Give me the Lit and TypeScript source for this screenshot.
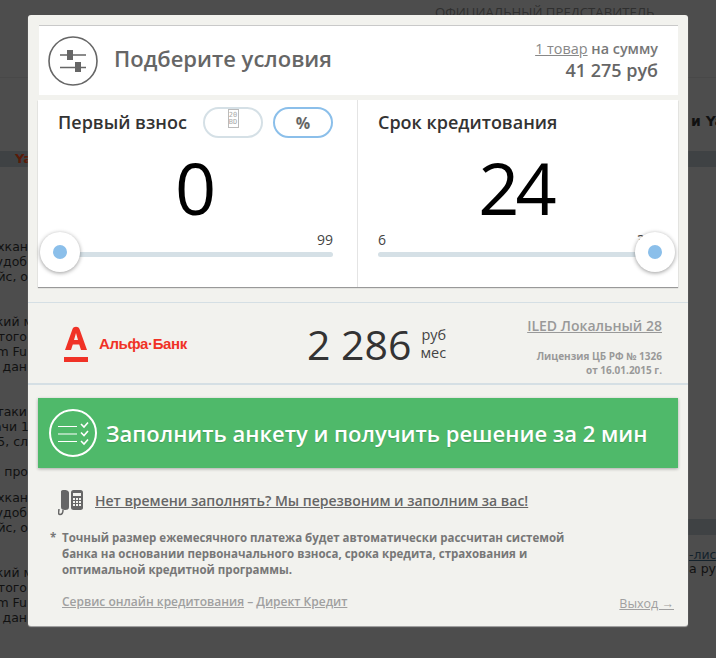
import { LitElement, html, css, svg } from "lit";
import { customElement } from "lit/decorators.js";

const backdrop: [string, number, number][] = [
  ["ухкан", 247, 28], ["удоб", 262, 27], ["йс, о", 277, 28],
  ["ский м", 322, 33], ["того", 337, 27], ["m Fu", 352, 27], ["дан", 367, 27],
  ["таки", 412, 27], ["ачи 1", 427, 29], ["X5, сл", 442, 28], ["х про", 472, 28],
  ["ухкан", 498, 28], ["удоб", 513, 27], ["йс, о", 528, 28],
  ["ский м", 573, 33], ["того", 588, 27], ["m Fu", 603, 27], ["дан", 618, 27],
];

@customElement("app-root")
export class AppRoot extends LitElement {
  static styles = css`
    :host { display: block; width: 716px; height: 658px; position: relative; overflow: hidden; background: #4d4d4d; font-family: "Open Sans", sans-serif; }
    .bg { position: absolute; inset: 0; font-family: "DejaVu Sans", sans-serif; font-size: 12.5px; color: #111; }
    .bgline { position: absolute; white-space: nowrap; line-height: 16px; }
    .rule { position: absolute; left: 0; right: 0; top: 77px; height: 1px; background: #484848; }
    .band { position: absolute; left: 0; right: 0; top: 151px; height: 16px; background: #3f4244; }
    .band.side { left: 688px; top: 519px; }
    .ya { position: absolute; left: 15px; top: 151px; font: bold 13px/16px "DejaVu Sans", sans-serif; color: #5a1a08; }
    .rep { position: absolute; left: 435px; top: 4px; font: 13.2px/16px "Open Sans", sans-serif; color: #2f2f2f; white-space: nowrap; }
    .iy { position: absolute; left: 691px; top: 113px; font: bold 14px/16px "DejaVu Sans", sans-serif; color: #111; white-space: nowrap; }
    .rt { position: absolute; left: 689px; white-space: nowrap; line-height: 16px; }
    .rt.link { top: 547px; text-decoration: underline; color: #14222c; }
    .rt.plain { top: 561px; }

    .modal { position: absolute; left: 28px; top: 15px; width: 660px; height: 611px; box-sizing: border-box; padding-top: 10px; background: #f2f2ee; border-radius: 3px; box-shadow: 0 1px 1px #aaa; color: #666; }

    .head { height: 70px; margin: 0 10px 0 11px; box-sizing: border-box; border-top: 1px solid #c9c9c9; background: #fff; display: flex; align-items: center; padding: 0 20px 0 9px; }
    .head svg { flex: none; }
    .title { margin: 0 0 5px 16px; font-size: 22px; font-weight: 600; color: #666; flex: 1; }
    .sum { text-align: right; line-height: 21px; padding-bottom: 2px; }
    .sum .l1 { font-size: 14.4px; font-weight: 600; color: #777; }
    .sum .l1 u { font-weight: 400; color: #888; }
    .sum .l2 { font-size: 18px; font-weight: 600; color: #666; line-height: 23px; }

    .cards { margin: 5px 10px 0; height: 187px; background: #fff; display: flex; box-shadow: 0 1px 1px #999; }
    .card { box-sizing: border-box; padding: 7px 25px 0 20px; position: relative; flex: 0 0 321px; }
    .card.first { flex: 0 0 319px; padding-right: 24px; }
    .card + .card { border-left: 1px solid #e4e4e4; }
    .top { display: flex; align-items: center; height: 31px; }
    .lab { font-size: 18px; font-weight: 600; color: #333; flex: 1; margin-top: -2px; }
    .pill { width: 60px; height: 31px; box-sizing: border-box; border: 2px solid #d5e0e6; border-radius: 16px; display: flex; align-items: flex-start; justify-content: center; }
    .pill + .pill { margin-left: 10px; }
    .pill.on { border-color: #8bbfea; font-size: 16px; font-weight: 700; color: #666; align-items: center; }
    .tofu { width: 11px; height: 19px; box-sizing: border-box; border: 1px solid #bbb; font: 7px/7px "DejaVu Sans Mono", monospace; color: #aaa; text-align: center; display: flex; flex-direction: column; justify-content: center; }
    .big { font-size: 72px; line-height: 98px; color: #000; text-align: center; height: 98px; }
    .big.tight { letter-spacing: -4px; }
    .limits { display: flex; justify-content: space-between; font-size: 14px; line-height: 18px; color: #444; margin-top: -5px; }
    .track { height: 5px; margin-top: 3px; border-radius: 3px; background: #d5e0e6; position: relative; }
    .knob { position: absolute; top: -20px; width: 40px; height: 40px; border-radius: 50%; background: #fff; box-shadow: 0 1px 4px rgba(0,0,0,.4); display: flex; align-items: center; justify-content: center; }
    .knob::after { content: ""; width: 14px; height: 14px; border-radius: 50%; background: #8bbfea; }
    .knob.a { left: -18px; }
    .knob.b { right: -22px; }

    .offer { margin-top: 15px; height: 83px; box-sizing: border-box; border-top: 1px solid #d5dfe4; border-bottom: 2px solid #d5dfe4; display: flex; align-items: center; padding-right: 26px; }
    .logo { display: flex; align-items: flex-start; margin-left: 36px; width: 243px; flex: none; padding-top: 2px; }
    .alfa { margin: 9px 0 0 11px; font: bold 15px/18px "Liberation Sans", sans-serif; letter-spacing: -.4px; color: #f03226; white-space: nowrap; }
    .price { font-size: 41px; color: #333; white-space: nowrap; line-height: 50px; margin-top: 2px; }
    .unit { margin: 2px 0 0 9px; font-size: 14.5px; line-height: 18px; color: #444; text-align: right; }
    .bank { margin-left: auto; text-align: right; align-self: flex-start; padding-top: 13px; }
    .bank u { display: block; font-size: 14px; font-weight: 600; color: #999; line-height: 20px; }
    .lic { margin-top: 13px; font-size: 10px; font-weight: 700; line-height: 14px; color: #999; }

    .cta { margin: 13px 10px 0; height: 70px; background: #4fb96a; box-shadow: 0 1px 3px rgba(0,0,0,.3); display: flex; align-items: center; padding-left: 10px; color: #fff; font-size: 22px; font-weight: 600; text-shadow: 0 1px 1px rgba(0,0,0,.15); }
    .cta span { margin-left: 8px; white-space: nowrap; }

    .call { margin: 22px 0 0 30px; display: flex; align-items: flex-start; height: 31px; }
    .call u { margin: 1px 0 0 11px; font-size: 14px; font-weight: 600; line-height: 20px; color: #666; white-space: nowrap; }
    .note { position: relative; margin: 9px 0 0 34px; font-size: 11.5px; font-weight: 700; line-height: 16px; color: #777; white-space: nowrap; }
    .note i { position: absolute; left: -12px; top: 0; font-style: normal; }
    .foot { display: flex; justify-content: space-between; align-items: flex-end; margin: 16px 14px 0 34px; font-size: 12px; font-weight: 600; color: #a0a0a0; line-height: 16px; }
    .foot .x { font-size: 12.5px; font-weight: 400; position: relative; top: 2px; }
  `;

  private sliders() {
    return svg`<circle cx="25" cy="25" r="24" fill="none" stroke="#666" stroke-width="1.6"/>
      <path d="M12 19h26M12 31.500h26" stroke="#666" stroke-width="1.300" fill="none"/>
      <rect x="19" y="14" width="6" height="10" fill="#666"/>
      <rect x="27" y="26" width="6" height="10" fill="#666"/>`;
  }

  private checklist() {
    return svg`<circle cx="24" cy="24" r="23" fill="none" stroke="#fff" stroke-width="2"/>
      <path d="M9 17.500h19M9 25h19M9 32.500h19" stroke="#fff" stroke-width="1.200" fill="none"/>
      <path d="M32 15l3 3 4-4.500M32 23.500l3 3 4-4.500M32 32l3 3 4-4.500" stroke="#fff" stroke-width="1.600" fill="none"/>`;
  }

  private phone() {
    return svg`<path d="M3 1.500C3 .500 4 0 6 0s5 .500 5 3v14c0 2-1 3-4 3-3 0-4-1-4-3z" fill="#666"/>
      <path d="M5 20c0 3-1 4.500-3 4.500S.600 22.500 1 19" fill="none" stroke="#666" stroke-width="1.500"/>
      <rect x="13" y="0" width="12" height="20" rx="2.500" fill="#666"/>
      <rect x="15" y="3" width="8" height="3" fill="#f2f2ee"/>
      <path d="M15 8h2v2h-2zM18 8h2v2h-2zM21 8h2v2h-2zM15 11h2v2h-2zM18 11h2v2h-2zM21 11h2v2h-2zM15 14h2v2h-2zM18 14h2v2h-2zM21 14h2v2h-2z" fill="#f2f2ee"/>`;
  }

  private alfaMark() {
    return svg`<path d="M1 24 L8.500 3 C9.500 0 14.500 0 15.500 3 L23 24 H17 L15.200 18.500 H8.800 L7 24 Z M10 14 H14 L12 7 Z" fill="#f03226" fill-rule="evenodd"/>
      <rect x="0" y="31" width="24" height="5" fill="#f03226"/>`;
  }

  render() {
    return html`
      <div class="bg">
        <div class="rep">ОФИЦИАЛЬНЫЙ ПРЕДСТАВИТЕЛЬ</div>
        <div class="rule"></div>
        <div class="band"></div>
        <div class="band side"></div>
        <div class="ya">Ya</div>
        <div class="iy">и Ya</div>
        ${backdrop.map(
          ([t, y, edge]) =>
            html`<div class="bgline" style="top:${y - 8}px;right:${716 - edge}px">${t}</div>`,
        )}
        <div class="rt link">-лист</div>
        <div class="rt plain">а рус</div>
      </div>

      <div class="modal">
        <div class="head">
          <svg width="50" height="50" viewBox="0 0 50 50">${this.sliders()}</svg>
          <div class="title">Подберите условия</div>
          <div class="sum">
            <div class="l1"><u>1 товар</u> на сумму</div>
            <div class="l2">41 275 руб</div>
          </div>
        </div>

        <div class="cards">
          <div class="card first">
            <div class="top">
              <div class="lab">Первый взнос</div>
              <div class="pill"><div class="tofu"><div>20</div><div>BD</div></div></div>
              <div class="pill on">%</div>
            </div>
            <div class="big">0</div>
            <div class="limits"><span></span><span>99</span></div>
            <div class="track"><div class="knob a"></div></div>
          </div>
          <div class="card">
            <div class="top"><div class="lab">Срок кредитования</div></div>
            <div class="big tight">24</div>
            <div class="limits"><span>6</span><span>36</span></div>
            <div class="track"><div class="knob b"></div></div>
          </div>
        </div>

        <div class="offer">
          <div class="logo">
            <svg width="24" height="36" viewBox="0 0 24 36">${this.alfaMark()}</svg>
            <div class="alfa">Альфа·Банк</div>
          </div>
          <div class="price">2 286</div>
          <div class="unit">руб<br />мес</div>
          <div class="bank">
            <u>ILED Локальный 28</u>
            <div class="lic">Лицензия ЦБ РФ № 1326<br />от 16.01.2015 г.</div>
          </div>
        </div>

        <div class="cta">
          <svg width="50" height="50" viewBox="-1 -1 50 50">${this.checklist()}</svg>
          <span>Заполнить анкету и получить решение за 2 мин</span>
        </div>

        <div class="call">
          <svg width="26" height="26" viewBox="0 0 26 26">${this.phone()}</svg>
          <u>Нет времени заполнять? Мы перезвоним и заполним за вас!</u>
        </div>

        <div class="note"><i>*</i>Точный размер ежемесячного платежа будет автоматически рассчитан системой<br />банка на основании первоначального взноса, срока кредита, страхования и<br />оптимальной кредитной программы.</div>

        <div class="foot">
          <span><u>Сервис онлайн кредитования</u> – <u>Директ Кредит</u></span>
          <u class="x">Выход →</u>
        </div>
      </div>
    `;
  }
}
